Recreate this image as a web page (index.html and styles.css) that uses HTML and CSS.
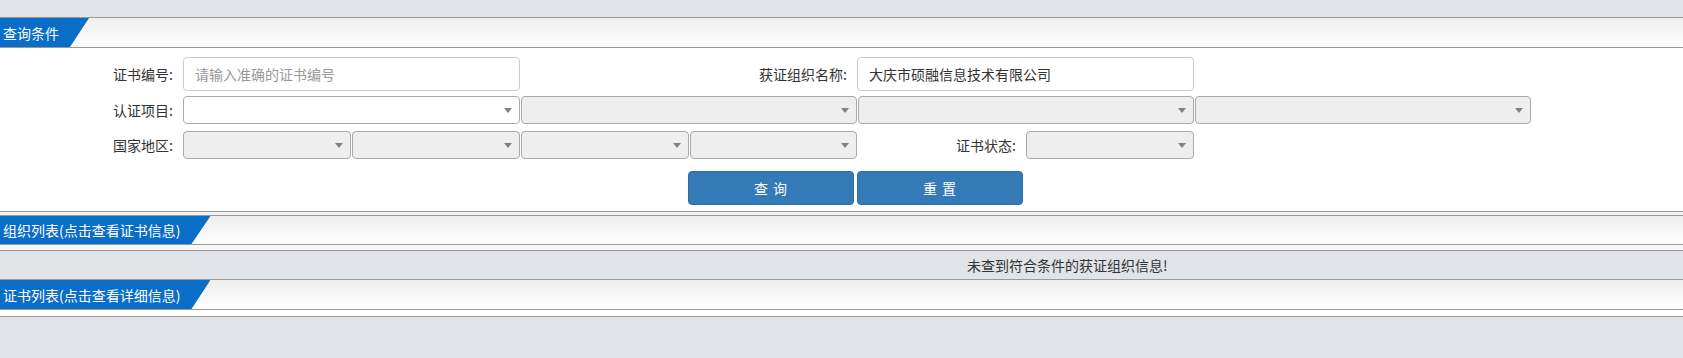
FILE: index.html
```html
<!DOCTYPE html>
<html lang="zh-CN">
<head>
<meta charset="utf-8">
<title>证书查询</title>
<link rel="stylesheet" href="styles.css">
</head>
<body>
<div class="page">
  <section class="panel">
    <div class="panel-head"><span class="tab">查询条件</span></div>
    <div class="query">
      <div class="lbl row1">证书编号:</div>
      <input class="field col1 row1" type="text" placeholder="请输入准确的证书编号">
      <div class="lbl col2 row1 lbl-mid">获证组织名称:</div>
      <input class="field col3 row1 field-shift" type="text" value="大庆市硕融信息技术有限公司">

      <div class="lbl row2">认证项目:</div>
      <div class="sel sel-on col1 row2"><i class="arrow"></i></div>
      <div class="sel col2 row2"><i class="arrow"></i></div>
      <div class="sel col3 row2"><i class="arrow"></i></div>
      <div class="sel col4 row2"><i class="arrow"></i></div>

      <div class="lbl row3">国家地区:</div>
      <div class="pair col1 row3">
        <div class="sel"><i class="arrow"></i></div>
        <div class="sel"><i class="arrow"></i></div>
      </div>
      <div class="pair col2 row3">
        <div class="sel"><i class="arrow"></i></div>
        <div class="sel"><i class="arrow"></i></div>
      </div>
      <div class="status col3 row3">
        <span class="status-lbl">证书状态:</span>
        <div class="sel sel-status"><i class="arrow"></i></div>
      </div>

      <button class="btn btn-left col2 row4" type="button">查 询</button>
      <button class="btn btn-right col3 row4" type="button">重 置</button>
    </div>
  </section>

  <div class="gap"></div>

  <section class="panel">
    <div class="panel-head panel-head-short"><span class="tab">组织列表(点击查看证书信息)</span></div>
    <div class="panel-body body-org"></div>
  </section>

  <div class="empty-msg">未查到符合条件的获证组织信息!</div>

  <section class="panel">
    <div class="panel-head"><span class="tab">证书列表(点击查看详细信息)</span></div>
    <div class="panel-body body-cert"></div>
  </section>
</div>
</body>
</html>
```

FILE: styles.css
```css
* {
  box-sizing: border-box;
}

html,
body {
  margin: 0;
  padding: 0;
}

body {
  background: #e0e4e8;
  font-family: "Noto Sans CJK SC", "Microsoft YaHei", sans-serif;
  color: #333;
}

.page {
  padding-top: 17px;
}

.panel {
  border-bottom: 1px solid #9a9a9a;
}

.panel-head {
  height: 31px;
  border-top: 1px solid #9a9a9a;
  border-bottom: 1px solid #9a9a9a;
  background: linear-gradient(#eeeeee, #ffffff);
  display: flex;
}

.panel-head-short {
  height: 30px;
}

.tab {
  display: flex;
  align-items: center;
  height: 100%;
  padding: 0 30px 0 3px;
  background: #0a6dc8;
  color: #fff;
  font-size: 14px;
  white-space: nowrap;
  clip-path: polygon(0 0, 100% 0, calc(100% - 19px) 100%, 0 100%);
}

/* query form */
.query {
  background: #fff;
  display: grid;
  grid-template-columns: 182px 337px 336px 336px 336px;
  grid-template-rows: 34px 28px 30px 41px;
  column-gap: 1px;
  row-gap: 5px;
  padding: 9px 0 6px;
}

.row1 { grid-row: 1; }
.row2 { grid-row: 2; }
.row3 { grid-row: 3; align-self: end; height: 28px; }
.row4 { grid-row: 4; align-self: end; }
.col1 { grid-column: 2; }
.col2 { grid-column: 3; }
.col3 { grid-column: 4; }
.col4 { grid-column: 5; }

.lbl {
  grid-column: 1;
  display: flex;
  align-items: center;
  justify-content: flex-end;
  padding-right: 9px;
  font-size: 14px;
  color: #333;
  white-space: nowrap;
}

.lbl-mid {
  grid-column: 3;
  padding-right: 10px;
}

.field {
  width: 100%;
  height: 34px;
  margin: 0;
  border: 1px solid #cccccc;
  border-radius: 4px;
  padding: 0 11px;
  font-family: inherit;
  font-size: 14px;
  color: #333;
  background: #fff;
  outline: none;
}

.field::placeholder {
  color: #999;
  font-size: 14px;
}

.field-shift {
  margin-left: -1px;
  width: calc(100% + 1px);
}

.sel {
  height: 28px;
  border: 1px solid #aaaaaa;
  border-radius: 4px;
  background: #eeeeee;
  display: flex;
  align-items: center;
  justify-content: flex-end;
  padding-right: 7px;
}

.sel-on {
  background: #fff;
}

.arrow {
  display: block;
  width: 0;
  height: 0;
  border-left: 4px solid transparent;
  border-right: 4px solid transparent;
  border-top: 5px solid #808080;
}

.pair {
  display: flex;
  gap: 1px;
}

.pair .sel {
  flex: 1;
}

.status {
  display: flex;
  align-items: center;
  justify-content: flex-end;
  gap: 10px;
}

.status-lbl {
  font-size: 14px;
  color: #333;
  white-space: nowrap;
}

.sel-status {
  width: 168px;
}

.btn {
  width: 166px;
  height: 34px;
  border: 1px solid #2e6da4;
  border-radius: 4px;
  background: #337ab7;
  color: #fff;
  font-family: inherit;
  font-size: 14px;
  letter-spacing: 1px;
  padding: 0;
  cursor: pointer;
}

.btn-left {
  justify-self: end;
  margin-right: 3px;
}

.btn-right {
  justify-self: start;
  margin-left: -1px;
}

.gap {
  height: 3px;
  background: #f2f2f2;
}

.panel-body {
  background: #fff;
}

.body-org {
  height: 5px;
  background: #f7f7f7;
}

.body-cert {
  height: 6px;
}

.empty-msg {
  height: 28px;
  display: flex;
  align-items: center;
  padding-left: 967px;
  font-size: 14px;
  color: #333;
  white-space: nowrap;
}
```
